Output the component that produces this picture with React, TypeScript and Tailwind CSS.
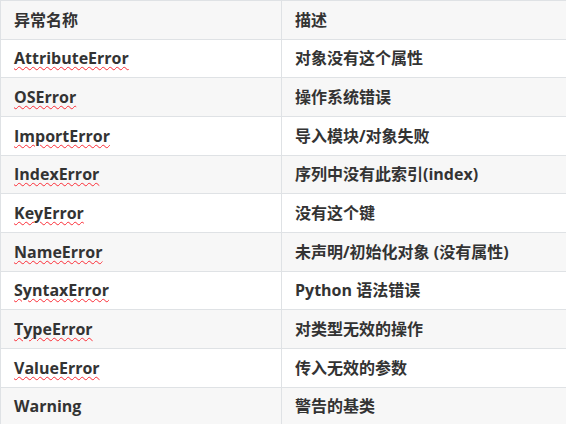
const rows = [
  ["AttributeError", "对象没有这个属性"],
  ["OSError", "操作系统错误"],
  ["ImportError", "导入模块/对象失败"],
  ["IndexError", "序列中没有此索引(index)"],
  ["KeyError", "没有这个键"],
  ["NameError", "未声明/初始化对象 (没有属性)"],
  ["SyntaxError", "Python 语法错误"],
  ["TypeError", "对类型无效的操作"],
  ["ValueError", "传入无效的参数"],
  ["Warning", "警告的基类"],
]

export default function App() {
  return (
    <div
      className="w-[566px] h-[424px] overflow-hidden bg-white text-[#333] text-[16px]"
      style={{ fontFamily: '"Open Sans", "Noto Sans CJK SC", sans-serif' }}
    >
      <div className="w-[600px] border-l border-t border-[#dfe2e5]">
        {/* header */}
        <div className="flex h-[38.6px] items-center bg-[#f7f7f7] border-b border-[#dfe2e5] font-bold">
          <div className="w-[281px] h-full flex items-center px-[13px] border-r border-[#dfe2e5]">异常名称</div>
          <div className="flex-1 h-full flex items-center px-[13px]">描述</div>
        </div>
        {rows.map(([name, desc], i) => (
          <div
            key={name}
            className={`flex h-[38.67px] items-center border-b border-[#dfe2e5] font-bold ${
              i % 2 === 1 ? "bg-[#f7f7f7]" : "bg-white"
            }`}
          >
            <div className="w-[281px] h-full flex items-center px-[13px] border-r border-[#dfe2e5]">
              <span
                className={
                  name === "Warning"
                    ? ""
                    : "underline decoration-wavy decoration-red-500 decoration-1 underline-offset-[2px]"
                }
              >
                {name}
              </span>
            </div>
            <div className="flex-1 h-full flex items-center px-[13px]">{desc}</div>
          </div>
        ))}
      </div>
    </div>
  )
}
